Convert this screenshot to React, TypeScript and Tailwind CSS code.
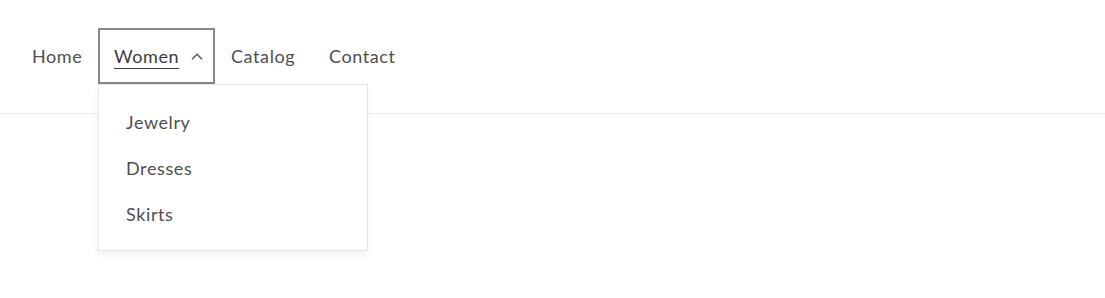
import React from "react";

export default function App() {
  const font = { fontFamily: "Lato, 'Noto Sans', sans-serif" };
  return (
    <div className="w-[1105px] h-[298px] bg-white text-[#4f4f4f]" style={font}>
      <header className="relative h-[114px] border-b border-[#ebebeb] flex items-start pt-[28px]">
        <nav className="flex items-center pl-[32px] text-[18px] tracking-[0.6px]">
          <a className="w-[66px] leading-[24px]">Home</a>
          <div className="relative">
            <div className="w-[117px] h-[56px] border-2 border-[#888888] flex items-center pl-[14px]">
              <span className="underline underline-offset-[5px] decoration-[1px] leading-[24px] text-[#3d3d3d]">Women</span>
              <svg
                className="ml-auto mr-[10px]"
                width="12"
                height="7"
                viewBox="0 0 12 7"
                fill="none"
                stroke="#555555"
                strokeWidth="1.4"
              >
                <path d="M1 6.2 L6 1.2 L11 6.2" />
              </svg>
            </div>
            <ul className="absolute left-0 top-full w-[270px] h-[167px] bg-white border border-[#e6e6e6] shadow-[0_4px_8px_rgba(0,0,0,0.05)] pt-[14px] pb-[13px] z-10">
              <li className="h-[46px] flex items-center pl-[27px]">Jewelry</li>
              <li className="h-[46px] flex items-center pl-[27px]">Dresses</li>
              <li className="h-[46px] flex items-center pl-[27px]">Skirts</li>
            </ul>
          </div>
          <a className="w-[98px] pl-[16px] leading-[24px]">Catalog</a>
          <a className="pl-[16px] leading-[24px]">Contact</a>
        </nav>
      </header>
    </div>
  );
}
